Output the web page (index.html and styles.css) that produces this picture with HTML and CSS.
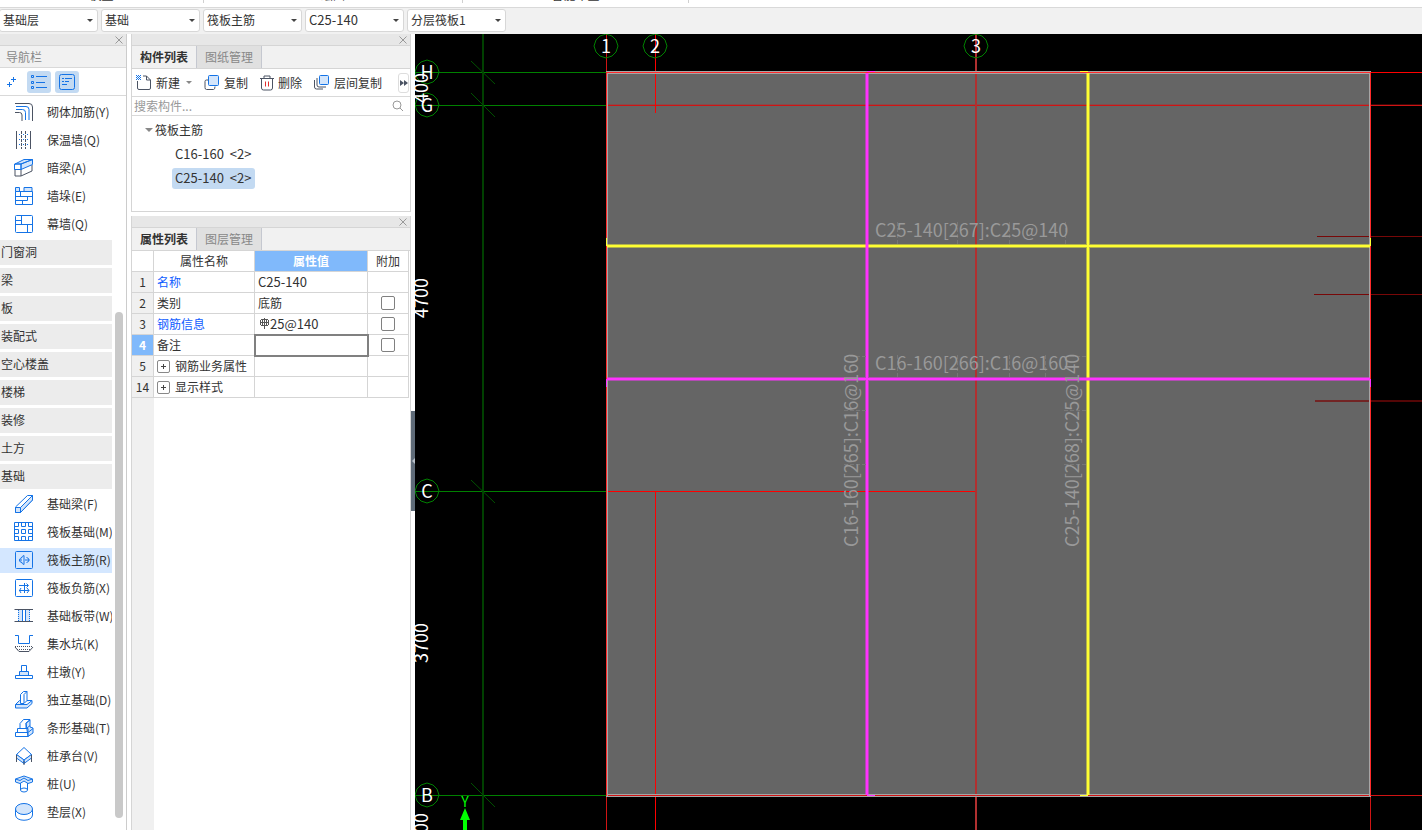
FILE: index.html
```
<!DOCTYPE html>
<html lang="zh-CN">
<head>
    <meta charset="UTF-8">
    <meta name="viewport" content="width=device-width, initial-scale=1.0">
    <title>筏板主筋</title>
    <link rel="stylesheet" href="styles.css">
</head>
<body>
    <div class="ribbon">
        <span class="ribbon-group ribbon-wide">模型</span>
        <span class="ribbon-group ribbon-mid">绘图</span>
        <span class="ribbon-group ribbon-short">智能布置</span>
    </div>

    <div class="context-bar">
        <span class="combo"><select aria-label="楼层"><option>基础层</option></select></span>
        <span class="combo"><select aria-label="构件分类"><option>基础</option></select></span>
        <span class="combo"><select aria-label="构件类型"><option>筏板主筋</option></select></span>
        <span class="combo"><select class="latin" aria-label="构件名称"><option>C25-140</option></select></span>
        <span class="combo"><select aria-label="分层"><option>分层筏板1</option></select></span>
    </div>

    <div class="workspace">
        <nav class="nav-panel">
            <div class="panel-strip"><button class="close-button" aria-label="关闭导航栏"><svg width="8" height="8"><path d="M0.5 0.5l7 7M7.5 0.5l-7 7"/></svg></button></div>
            <div class="nav-title">导航栏</div>
            <div class="nav-tools">
                <button class="nav-tool" aria-label="添加"><svg class="icon" width="10" height="12"><path d="M6.500 1v5M4 3.500h5M2.500 6v5M0 8.500h5"/></svg></button>
                <button class="nav-tool active" aria-label="列表"><svg class="icon" width="18" height="16"><path d="M6 2.500h11M6 8.500h9M6 13.500h11"/><path d="M1.500 1.500h2v2h-2zM1.500 7.500h2v2h-2zM1.500 12.500h2v2h-2z"/></svg></button>
                <button class="nav-tool active" aria-label="详情"><svg class="icon" width="16" height="16"><rect x="0.500" y="0.500" width="15" height="15" rx="2"/><path d="M3 4.500h2M6 4.500h7M3 7.500h2M6 7.500h4M3 10.500h5"/></svg></button>
            </div>
            <div class="nav-body">
                <ul class="nav-list">
                    <li><a class="nav-item" href="#"><svg class="icon" width="20" height="20"><path class="dark" d="M1 1.500h14q3.500 0 3.500 3.500v14M1 10.500h4.500q2.500 0 2.500 2.500v6"/><path d="M2 4.500h10q3 0 3 3V18M2 7.500h6.500q3 0 3 3V18"/></svg>砌体加筋(Y)</a></li>
                    <li><a class="nav-item" href="#"><svg class="icon" width="20" height="20"><path class="dark" d="M2.500 1v18M16.500 1v18"/><path class="dark" stroke-dasharray="3 1" d="M7.500 1v18M11.500 1v18"/><path stroke-dasharray="1 3" d="M5 4.500h10M5 9.500h10M5 14.500h10"/></svg>保温墙(Q)</a></li>
                    <li><a class="nav-item" href="#"><svg class="icon" width="20" height="20"><path class="dark" d="M1 11v7h6v-7M7 18l11-5V7"/><path class="tint" d="M1 6l9-4.500h8.500L7 6zM7 6l11.500-4.500v5L7 11.500z"/><path d="M0.500 6H7v5.500H0.500z"/></svg>暗梁(A)</a></li>
                    <li><a class="nav-item" href="#"><svg class="icon" width="20" height="20"><path class="tint" d="M1.500 1.500h4v4h4.500v-4h8v4H1.500z"/><path d="M1.500 5.500h17v13h-17zM1.500 10.500h17M6.500 5.500v5M13.500 10.500v4M1.500 14.500h12M8.500 14.500v4"/></svg>墙垛(E)</a></li>
                    <li><a class="nav-item" href="#"><svg class="icon" width="20" height="20"><rect x="1.500" y="1.500" width="17" height="17" rx="1"/><path d="M1.500 10.500h17M1.500 6.500h6M7.500 1.500v9M13.500 10.500v8"/></svg>幕墙(Q)</a></li>
                    <li><a class="nav-group" href="#">门窗洞</a></li>
                    <li><a class="nav-group" href="#">梁</a></li>
                    <li><a class="nav-group" href="#">板</a></li>
                    <li><a class="nav-group" href="#">装配式</a></li>
                    <li><a class="nav-group" href="#">空心楼盖</a></li>
                    <li><a class="nav-group" href="#">楼梯</a></li>
                    <li><a class="nav-group" href="#">装修</a></li>
                    <li><a class="nav-group" href="#">土方</a></li>
                    <li><a class="nav-group" href="#">基础</a></li>
                    <li><a class="nav-item" href="#"><svg class="icon" width="20" height="20"><path d="M1.500 13L13.500 1.500h5v4.500L6.500 18.500h-5z"/><path class="tint" d="M1.500 13.500h5v5h-5zM6.500 13.500l12-12v4.500l-12 12.500z"/></svg>基础梁(F)</a></li>
                    <li><a class="nav-item" href="#"><svg class="icon" width="20" height="20"><path d="M0.500 0.500h18v18h-18z"/><path d="M4.500 0.500v4h-4M7.500 0.500v4h4v-4M14.500 0.500v4h4M0.500 7.500h4v4h-4M7.500 7.500h4v4h-4zM18.500 7.500h-4v4h4M0.500 14.500h4v4M7.500 18.500v-4h4v4M14.500 18.500v-4h4"/></svg>筏板基础(M)</a></li>
                    <li><a class="nav-item selected" href="#"><svg class="icon" width="20" height="20"><rect x="1.500" y="1.500" width="17" height="17" rx="1"/><path d="M10 5.500v9M5 10h3M11 10h4.500M10 5.500q-2 .5-2.500 2.500M10 14.500q-2-.5-2.500-2.500M8 7.500q-2 .5-2.500 2.500t2.500 2.500M12.500 7.500q2.500.5 2.500 2.500t-2.500 2.500"/></svg>筏板主筋(R)</a></li>
                    <li><a class="nav-item" href="#"><svg class="icon" width="20" height="20"><rect x="1.500" y="1.500" width="17" height="17" rx="1"/><path d="M5 7.500h9M5 12.500h10M10.500 5v10M12.500 5.500l2 2-2 2M7 10l-1.500 2.500L7 15M13 10l2 2.500-2 2.500"/></svg>筏板负筋(X)</a></li>
                    <li><a class="nav-item" href="#"><svg class="icon" width="20" height="20"><path class="fill" d="M4 4h4v11H4zM12 4h4v11h-4z"/><path class="dark" d="M0.500 3.500h18.500M0.500 15.500h18.500"/><path d="M8.500 4v11M11.500 4v11"/><path stroke-dasharray="1 1" d="M4.500 4v11M15.500 4v11"/></svg>基础板带(W)</a></li>
                    <li><a class="nav-item" href="#"><svg class="icon" width="20" height="20"><path d="M1 1.500h3.500v8h11v-8H19"/><path class="dark" stroke-dasharray="1 1" d="M1 12.500h18M3 15.500h14"/><path class="dark" d="M1 13l4 4.500h10l4-4.500"/></svg>集水坑(K)</a></li>
                    <li><a class="nav-item" href="#"><svg class="icon" width="20" height="20"><path class="tint" d="M5.500 9.500h9v4h-9z"/><path d="M7.500 3.500h5v6h-5zM1.500 13.500h17v3h-17z"/></svg>柱墩(Y)</a></li>
                    <li><a class="nav-item" href="#"><svg class="icon" width="20" height="20"><path class="tint" d="M1.500 14.500l4-4h12.500v3l-5 4.500H1.500zM1.500 14.500H13l5-4"/><path class="paper" d="M6.500 4.500l3-3h3.500v9l-3 3H6.500zM10 13V4.500l3-3"/></svg>独立基础(D)</a></li>
                    <li><a class="nav-item" href="#"><svg class="icon" width="20" height="20"><path class="tint" d="M12 5l4-3v7l3 1v5l-5 3.500z"/><path d="M6 10.500V5.500L9.500 1.500H16l-4 4v5M3.500 14v-3.500H14V14M1.500 14.500H14v4H1.500zM14 14.500l5-4M12.500 10.500l3.500-3"/></svg>条形基础(T)</a></li>
                    <li><a class="nav-item" href="#"><svg class="icon" width="20" height="20"><path d="M2.500 8.500L10 1.500l7.500 7L10 14z"/><path class="tint" d="M2.500 8.500L10 14v3.500L2.500 12zM17.500 8.500L10 14v3.500l7.500-5.500z"/><path class="dark" d="M2.500 9v7M17.500 9v7M10 15v4"/></svg>桩承台(V)</a></li>
                    <li><a class="nav-item" href="#"><svg class="icon" width="20" height="20"><path class="paper" d="M6.500 8v8q0 2 3.500 2t3.500-2V8"/><path class="tint" d="M1.500 5l8.500-3 8.500 3v3L14 9.500 10 7 6 9.500 1.500 8z"/><path d="M1.500 5l4.500 1.500L10 4l4 2.500L18.500 5M6.500 16q0-2 3.500-2t3.500 2"/></svg>桩(U)</a></li>
                    <li><a class="nav-item" href="#"><svg class="icon" width="20" height="20"><path d="M1.500 7v6c0 7 17 7 17 0V7"/><ellipse class="tint" cx="10" cy="7" rx="8.500" ry="5.500"/></svg>垫层(X)</a></li>
                </ul>
                <div class="nav-scroll"></div>
            </div>
        </nav>

        <div class="side-panels">
            <section class="panel">
                <div class="panel-strip"><button class="close-button" aria-label="关闭构件列表"><svg width="8" height="8"><path d="M0.5 0.5l7 7M7.5 0.5l-7 7"/></svg></button></div>
                <div class="tabs">
                    <button class="tab active">构件列表</button>
                    <button class="tab">图纸管理</button>
                </div>
                <div class="component-tools">
                    <button class="tool"><svg class="icon" width="16" height="16"><path class="dark" d="M1.500 6v7q0 1.500 1.500 1.500h10q1.500 0 1.500-1.500V5l-4-4H7M10.500 1v4h4"/><path d="M0 0.500h1M2 0.500h1M4 0.500h1M1 1.500h1M3 1.500h1M0 2.500h1M2 2.500h1M4 2.500h1M1 3.500h1M3 3.500h1M0 4.500h1M2 4.500h1M4 4.500h1"/></svg>新建<i class="caret"></i></button>
                    <button class="tool"><svg class="icon" width="16" height="16"><path class="dark" d="M4 5H2.500Q1 5 1 6.500v6Q1 14.500 2.500 14.500h7q1.500 0 1.500-3"/><rect class="tint" x="4.500" y="0.500" width="10" height="10" rx="1"/></svg>复制</button>
                    <button class="tool"><svg class="icon" width="14" height="16"><path class="dark" d="M0 3.500h14M4 3V1h6v2M1.500 4v9q0 2 2 2h7q2 0 2-2V4"/><path class="red" d="M5.500 6.500v5M8.500 6.500v5"/></svg>删除</button>
                    <button class="tool"><svg class="icon" width="16" height="16"><path class="dark" d="M3 3v7q0 2 2 2h7M0.500 5v7q0 2 2 2H9"/><rect class="tint" x="5.500" y="0.500" width="9" height="9" rx="1"/></svg>层间复制</button>
                    <button class="tool-more" aria-label="更多"><svg width="8" height="6"><path d="M0 0l4 3-4 3zM4 0l4 3-4 3z"/></svg></button>
                </div>
                <div class="search">
                    <input type="text" placeholder="搜索构件..." aria-label="搜索构件">
                    <svg width="12" height="12"><circle cx="5" cy="5" r="4"/><path d="M8 8l3 3"/></svg>
                </div>
                <ul class="tree">
                    <li class="tree-root"><i class="caret"></i>筏板主筋</li>
                    <li><a class="tree-leaf latin" href="#">C16-160&nbsp; &lt;2&gt;</a></li>
                    <li><a class="tree-leaf latin selected" href="#">C25-140&nbsp; &lt;2&gt;</a></li>
                </ul>
            </section>

            <section class="panel panel-properties">
                <div class="panel-strip"><button class="close-button" aria-label="关闭属性列表"><svg width="8" height="8"><path d="M0.5 0.5l7 7M7.5 0.5l-7 7"/></svg></button></div>
                <div class="tabs">
                    <button class="tab active">属性列表</button>
                    <button class="tab">图层管理</button>
                </div>
                <div class="properties">
                    <table>
                        <colgroup><col class="col-index"><col class="col-name"><col class="col-value"><col class="col-extra"></colgroup>
                        <thead>
                            <tr><th></th><th>属性名称</th><th class="current">属性值</th><th>附加</th></tr>
                        </thead>
                        <tbody>
                            <tr><th>1</th><td class="key">名称</td><td class="latin">C25-140</td><td></td></tr>
                            <tr><th>2</th><td>类别</td><td>底筋</td><td class="check"><input type="checkbox" aria-label="附加类别"></td></tr>
                            <tr><th>3</th><td class="key">钢筋信息</td><td class="latin"><svg class="rebar" width="11" height="11"><path d="M5.500 0v11M3.500 1.500v6M7.500 1.500v6M2 1.500h7M1 4.500h9M2 7.500h7M1.500 2v5M9.500 2v5"/></svg>25@140</td><td class="check"><input type="checkbox" aria-label="附加钢筋信息"></td></tr>
                            <tr><th class="current">4</th><td>备注</td><td class="editing"></td><td class="check"><input type="checkbox" aria-label="附加备注"></td></tr>
                            <tr><th>5</th><td><button class="expand" aria-label="展开钢筋业务属性"></button>钢筋业务属性</td><td></td><td></td></tr>
                            <tr><th>14</th><td><button class="expand" aria-label="展开显示样式"></button>显示样式</td><td></td><td></td></tr>
                        </tbody>
                    </table>
                </div>
            </section>
        </div>

        <div class="splitter"><button class="splitter-handle" aria-label="收起面板"></button></div>

        <main class="canvas">
            <svg class="drawing" width="100%" height="100%">
                <defs>
                    <polygon id="bubble" points="0,-12 6,-10 10,-6 12,0 10,6 6,10 0,12 -6,10 -10,6 -12,0 -10,-6 -6,-10"/>
                </defs>

                <!-- 筏板 -->
                <rect class="slab" x="191" y="38" width="765" height="724"/>

                <!-- 轴网 -->
                <g class="axis-green">
                    <path d="M0 38.500h191M0 71.500h191M0 457.500h191M0 761.500h191"/>
                    <path class="dim-line" d="M68 0V2000"/>
                    <path class="dim-tick" d="M56 27l24 23M56 59l24 24M56 446l24 23M56 749l24 24"/>
                </g>
                <g class="axis-red">
                    <line x1="191" y1="38.500" x2="100%" y2="38.500"/>
                    <line class="soft" x1="191" y1="71.500" x2="100%" y2="71.500"/>
                    <line class="haze" x1="191" y1="70.500" x2="100%" y2="70.500"/>
                    <line class="soft" x1="191" y1="761.500" x2="100%" y2="761.500"/>
                    <path d="M191 457.500h370M240.500 0v79M240.500 457V2000"/>
                    <path class="wide" d="M561 0V2000"/>
                    <path class="soft" d="M191.500 0v38M191.500 762V2000M955.500 762V2000"/>
                </g>
                <g class="axis-dark">
                    <line x1="902" y1="202.500" x2="100%" y2="202.500"/>
                    <line x1="899" y1="260.500" x2="100%" y2="260.500"/>
                    <line class="wide" x1="900" y1="367" x2="100%" y2="367"/>
                </g>

                <!-- 筏板边线 -->
                <path class="slab-edge" d="M191 37.500h765M191 39.500h765M192.500 38v724M954.500 38v724M191 760.500h765M191 762.500h765"/>
                <path class="slab-outline" d="M191.500 762V38.500h764V762"/>

                <!-- 主筋 -->
                <g class="rebar-yellow">
                    <path class="glow" d="M192 212h763M673 39v722"/>
                    <path d="M192 212h763M673 39v722"/>
                    <path class="hook" d="M665 37.500h8M665 761.500h8M191.500 204v8M955.500 204v8"/>
                </g>
                <g class="rebar-magenta">
                    <path class="glow" d="M192 345h763M452 39v722"/>
                    <path d="M192 345h763M452 39v722"/>
                    <path class="hook" d="M452 37.500h8M452 761.500h8M191.500 345v8M955.500 345v8"/>
                </g>
                <path class="text-guides" d="M482.500 188v23M542.500 188v23M594.500 188v23M650.500 188v23M482.500 321v23M542.500 321v23M594.500 321v23M630.500 321v23M429 322.500h22M429 376.500h22M429 430.500h22M649 322.500h22M649 376.500h22M649 430.500h22"/>

                <g class="rebar-text">
                    <text x="460" y="203">C25-140[267]:C25@140</text>
                    <text x="460" y="336">C16-160[266]:C16@160</text>
                    <text transform="translate(443 513) rotate(-90)">C16-160[265]:C16@160</text>
                    <text transform="translate(664 513) rotate(-90)">C25-140[268]:C25@140</text>
                </g>

                <g class="bubbles">
                    <use href="#bubble" x="191" y="12"/>
                    <use href="#bubble" x="240" y="12"/>
                    <use href="#bubble" x="561" y="12"/>
                    <use href="#bubble" x="12" y="38"/>
                    <use href="#bubble" x="12" y="71"/>
                    <use href="#bubble" x="12" y="457"/>
                    <use href="#bubble" x="12" y="761"/>
                </g>
                <g class="axis-names">
                    <text x="191" y="19">1</text>
                    <text x="240" y="19">2</text>
                    <text x="561" y="19">3</text>
                    <text x="12" y="45">H</text>
                    <text x="12" y="78">G</text>
                    <text x="12" y="464">C</text>
                    <text x="12" y="768">B</text>
                </g>
                <g class="dimensions">
                    <text transform="translate(13 69) rotate(-90)">400</text>
                    <text transform="translate(13 284) rotate(-90)">4700</text>
                    <text transform="translate(13 629) rotate(-90)">3700</text>
                    <text transform="translate(13 819) rotate(-90)">3300</text>
                </g>

                <!-- 坐标系 -->
                <g class="ucs">
                    <text x="50" y="773">Y</text>
                    <path d="M50 774l5 12h-3v2000h-4V786h-3z"/>
                </g>
            </svg>
        </main>
    </div>
</body>
</html>
```
FILE: styles.css
```
* {
    box-sizing: border-box;
}
body {
    margin: 0;
    height: 100vh;
    display: flex;
    flex-direction: column;
    overflow: hidden;
    background: #fff;
    color: #333;
    font: 12px/16px "Noto Sans CJK SC", sans-serif;
}
button, input, select {
    font: inherit;
    color: inherit;
    margin: 0;
    padding: 0;
}
button {
    border: none;
    background: none;
}
a {
    color: inherit;
    text-decoration: none;
}
ul {
    list-style: none;
    margin: 0;
    padding: 0;
}
.latin {
    font-size: 13px;
}
.ribbon {
    flex: none;
    display: flex;
    align-items: flex-end;
    height: 8px;
    padding-bottom: 4px;
    border-bottom: 1px solid #d9d9d9;
    overflow: hidden;
}
.ribbon-group {
    height: 16px;
    text-align: center;
    border-right: 1px solid #d0d0d0;
}
.ribbon-wide {
    width: 204px;
}
.ribbon-mid {
    width: 259px;
}
.ribbon-short {
    width: 226px;
}
.context-bar {
    flex: none;
    display: flex;
    align-items: center;
    gap: 3px;
    height: 26px;
    padding-bottom: 1px;
    margin-left: -1px;
    background: #f1f1f1;
}
.combo {
    position: relative;
    width: 99px;
}
.combo select {
    display: block;
    width: 100%;
    height: 23px;
    padding: 0 3px 2px;
    border: 1px solid #d7d7d7;
    border-radius: 3px;
    background: #fff;
    appearance: none;
}
.combo::after {
    content: "";
    position: absolute;
    right: 5px;
    top: 10px;
    border: 3px solid transparent;
    border-top-color: #444;
    border-bottom: none;
}
.workspace {
    flex: 1;
    display: flex;
    min-height: 0;
}

/* Общие части панелей */
.panel-strip {
    flex: none;
    display: flex;
    align-items: center;
    justify-content: flex-end;
    height: 12px;
    padding-right: 3px;
    background: #e7e7e7;
    border-bottom: 1px solid #d5d5d5;
}
.close-button {
    display: flex;
}
.close-button path {
    stroke: #999;
}
.icon {
    flex: none;
    fill: none;
    stroke: #1473e6;
}
.icon .dark {
    stroke: #4b5363;
}
.icon .red {
    stroke: #e03030;
}
.icon .tint {
    fill: #d3e5fb;
}
.icon .fill {
    fill: #d3e5fb;
    stroke: none;
}
.icon .paper {
    fill: #fff;
}
.caret {
    border: 4px solid transparent;
    border-top-color: #888;
    border-bottom: none;
}

/* 导航栏 */
.nav-panel {
    flex: none;
    display: flex;
    flex-direction: column;
    width: 127px;
    border-right: 1px solid #ccc;
}
.nav-title {
    flex: none;
    height: 22px;
    padding-left: 6px;
    line-height: 22px;
    color: #888;
    background: #f1f1f1;
    border-bottom: 1px solid #d9d9d9;
}
.nav-tools {
    flex: none;
    display: flex;
    align-items: center;
    gap: 4px;
    height: 28px;
    border-bottom: 1px solid #d9d9d9;
}
.nav-tool {
    display: flex;
    align-items: center;
    justify-content: center;
    width: 24px;
    height: 22px;
    border-radius: 3px;
}
.nav-tool:first-child {
    width: 23px;
}
.nav-tool.active {
    background: #c3daf2;
}
.nav-body {
    flex: 1;
    display: flex;
    min-height: 0;
    padding-top: 4px;
}
.nav-list {
    width: 112px;
    overflow: hidden;
}
.nav-list li {
    height: 28px;
}
.nav-item {
    display: flex;
    align-items: center;
    gap: 13px;
    height: 25px;
    padding: 0 0 1px 14px;
    white-space: nowrap;
}
.nav-item.selected {
    background: #d4e7ff;
}
.nav-group {
    display: block;
    height: 25px;
    padding-left: 1px;
    line-height: 24px;
    background: #ececec;
}
.nav-scroll {
    width: 8px;
    margin: 212px 0 12px 3px;
    border-radius: 4px;
    background: #c9c9c9;
}

/* 构件列表 */
.side-panels {
    flex: none;
    display: flex;
    flex-direction: column;
    gap: 4px;
    width: 280px;
    margin-left: 4px;
}
.panel {
    border: 1px solid #d5d5d5;
    border-top: none;
}
.tabs {
    display: flex;
    height: 23px;
    background: #f1f1f1;
    border-bottom: 1px solid #d5d5d5;
}
.tab {
    width: 65px;
    height: 22px;
    line-height: 22px;
    color: #888;
    background: #e0e0e0;
    border-right: 1px solid #c5c8d0;
}
.tab.active {
    font-weight: bold;
    color: #333;
    background: #f1f1f1;
}
.component-tools {
    display: flex;
    align-items: center;
    gap: 12px;
    height: 28px;
    padding: 0 1px 0 4px;
    border-bottom: 1px solid #d9d9d9;
}
.tool {
    display: flex;
    align-items: center;
    gap: 4px;
    white-space: nowrap;
}
.tool .caret {
    margin-left: 2px;
    border-width: 3px;
    border-bottom: none;
}
.tool-more {
    display: flex;
    align-items: center;
    justify-content: center;
    width: 11px;
    height: 20px;
    margin-left: auto;
    border: 1px solid #ddd;
    border-radius: 3px;
}
.tool-more svg {
    flex: none;
    fill: #4b5363;
}
.search {
    display: flex;
    align-items: center;
    height: 19px;
    padding: 0 6px 0 2px;
    border-bottom: 1px solid #d9d9d9;
}
.search input {
    flex: 1;
    min-width: 0;
    border: none;
    outline: none;
}
.search input::placeholder {
    color: #999;
}
.search svg {
    fill: none;
    stroke: #999;
}
.tree {
    height: 95px;
    padding-top: 2px;
}
.tree li {
    display: flex;
    align-items: center;
    height: 24px;
    padding-left: 40px;
}
.tree .tree-root {
    gap: 2px;
    padding-left: 13px;
}
.tree-leaf {
    height: 21px;
    padding: 0 4px 0 3px;
    line-height: 20px;
    border-radius: 3px;
}
.tree-leaf.selected {
    background: #c3daf2;
}

/* 属性列表 */
.panel-properties {
    flex: 1;
    display: flex;
    flex-direction: column;
    border-bottom: none;
}
.properties {
    flex: 1;
    background: linear-gradient(90deg, #f0f0f0 22px, #fff 22px);
}
table {
    width: 277px;
    table-layout: fixed;
    border-collapse: separate;
    border-spacing: 0;
}
.col-index {
    width: 22px;
}
.col-name {
    width: 101px;
}
.col-value {
    width: 113px;
}
th, td {
    height: 21px;
    padding: 0 3px 0 2px;
    line-height: 18px;
    font-weight: normal;
    text-align: left;
    white-space: nowrap;
    border-right: 1px solid #d5d5d5;
    border-bottom: 1px solid #d5d5d5;
}
th {
    padding: 0;
    text-align: center;
}
thead th {
    background: #fff;
}
td {
    padding-left: 3px;
    background: #fff;
}
th.current {
    font-weight: bold;
    color: #fff;
    background: #80b9fb;
}
.key {
    color: #0f5dff;
}
.editing {
    outline: 2px solid #808080;
    outline-offset: -1px;
}
.check {
    padding: 0;
    text-align: center;
}
.check input {
    display: block;
    width: 14px;
    height: 14px;
    margin: 0 auto;
    border: 1px solid #808080;
    border-radius: 2px;
    appearance: none;
}
.expand {
    width: 13px;
    height: 13px;
    margin: 0 5px 2px 0;
    vertical-align: middle;
    border: 1px solid #888;
    border-radius: 2px;
    background:
        linear-gradient(#444, #444) center / 5px 1px no-repeat,
        linear-gradient(#444, #444) center / 1px 5px no-repeat;
}
.rebar {
    margin-left: 1px;
    stroke: #555;
    fill: none;
}

/* 绘图区 */
.splitter {
    flex: none;
    width: 4px;
    padding-top: 377px;
}
.splitter-handle {
    display: flex;
    align-items: center;
    justify-content: flex-end;
    width: 4px;
    height: 100px;
    background: #5f6b78;
}
.splitter-handle::after {
    content: "";
    border: 3px solid transparent;
    border-right-color: #b8c0c8;
    border-left: none;
}
.canvas {
    flex: 1;
    min-width: 0;
    background: #000;
    overflow: hidden;
}
.drawing {
    display: block;
    fill: none;
}
.slab {
    fill: #656565;
}
.slab-edge {
    stroke: #a5a5a5;
}
.slab-outline {
    stroke: #ff2a2a;
}
.axis-green {
    stroke: #008000;
}
.dim-line {
    stroke: #004000;
    stroke-width: 2;
}
.dim-tick {
    stroke: #005000;
}
.axis-red {
    stroke: #f00;
}
.axis-red .soft {
    stroke: #d01414;
}
.axis-red .haze {
    stroke: #d01414;
    opacity: 0.3;
}
.axis-red .wide {
    stroke: #b03030;
    stroke-width: 2;
}
.axis-dark {
    stroke: #780808;
}
.axis-dark .wide {
    stroke-width: 2;
    opacity: 0.7;
}
.rebar-yellow {
    stroke: #ffff32;
    stroke-width: 2;
}
.rebar-magenta {
    stroke: #ff32ff;
    stroke-width: 2;
}
.glow {
    stroke-width: 4;
    opacity: 0.5;
}
.hook {
    stroke-width: 1;
}
.text-guides {
    stroke: #777;
    stroke-dasharray: 4 2;
}
.rebar-text {
    font-size: 18px;
    fill: #999;
}
.bubbles {
    stroke: #008000;
}
.axis-names {
    font-size: 18px;
    fill: #fff;
    text-anchor: middle;
}
.dimensions {
    font-size: 18px;
    fill: #fff;
}
.ucs {
    font-size: 14px;
    fill: #0f0;
    text-anchor: middle;
}
```
